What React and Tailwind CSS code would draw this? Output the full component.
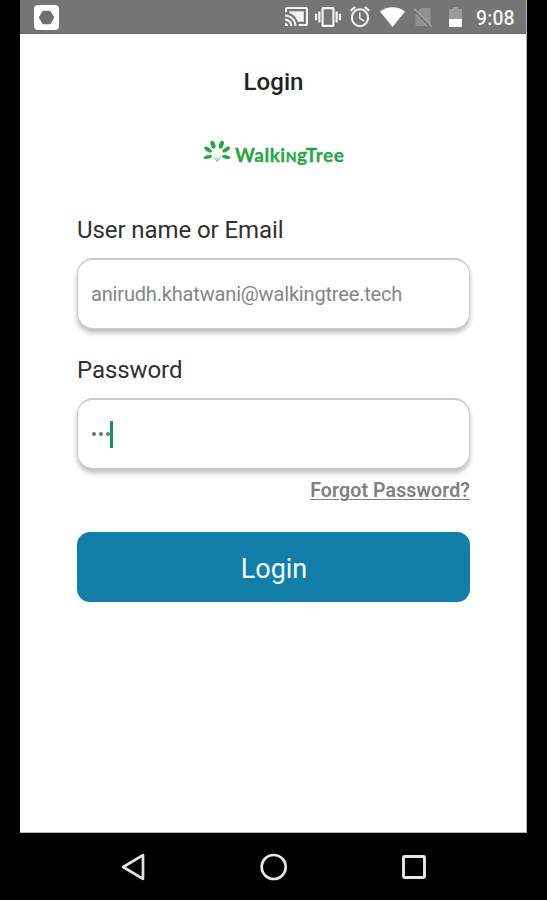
function StatusBar() {
  return (
    <header className="flex h-[34px] shrink-0 items-center border-b border-[#686868] bg-[#757575] pl-[14px] pr-[11px] text-[#f2f2f2]">
      <svg className="mt-px h-[25px] w-[25px]" viewBox="0 0 25 25">
        <rect width="25" height="25" rx="4" fill="#fff" />
        <path d="M9.300 7h6.400l3.200 5.500-3.200 5.500H9.300l-3.200-5.500z" fill="#707070" stroke="#707070" strokeWidth="2.400" strokeLinejoin="round" />
      </svg>
      <svg className="ml-auto h-[19px] w-[23px]" viewBox="1 3 22 18" preserveAspectRatio="none" fill="currentColor">
        <path d="M1 18v3h3c0-1.66-1.34-3-3-3zm0-4v2c2.76 0 5 2.24 5 5h2c0-3.87-3.13-7-7-7zm18-7H5v1.63c3.96 1.28 7.09 4.41 8.37 8.37H19V7zM1 10v2c4.97 0 9 4.03 9 9h2c0-6.08-4.93-11-11-11zm20-7H3c-1.1 0-2 .9-2 2v3h2V5h18v14h-7v2h7c1.1 0 2-.9 2-2V5c0-1.1-.9-2-2-2z" />
      </svg>
      <svg className="ml-[7px] h-5 w-[26px]" viewBox="0 3 24 18" preserveAspectRatio="none" fill="currentColor">
        <path d="M0 15h2V9H0v6zm3 2h2V7H3v10zm19-8v6h2V9h-2zm-3 8h2V7h-2v10zM16.500 3h-9C6.670 3 6 3.670 6 4.500v15c0 .83.67 1.500 1.500 1.500h9c.83 0 1.500-.67 1.500-1.500v-15c0-.83-.67-1.500-1.500-1.500zM16 19H8V5h8v14z" />
      </svg>
      <svg className="ml-[9px] h-[21px] w-[20px]" viewBox="2 1.8 20 20.2" preserveAspectRatio="none" fill="currentColor">
        <path d="M22 5.720l-4.600-3.860-1.290 1.530 4.600 3.860L22 5.720zM7.880 3.390L6.600 1.860 2 5.710l1.290 1.530 4.590-3.850zM12.500 8H11v6l4.750 2.850.75-1.230-4-2.370V8zM12 4c-4.970 0-9 4.030-9 9s4.020 9 9 9c4.970 0 9-4.030 9-9s-4.030-9-9-9zm0 16c-3.870 0-7-3.130-7-7s3.130-7 7-7 7 3.130 7 7-3.130 7-7 7z" />
      </svg>
      <svg className="ml-[10px] h-5 w-[25px]" viewBox="0 0 25 20" fill="#fff">
        <path d="M0 4.500C7 -1.300 18 -1.300 25 4.500L12.500 20z" />
      </svg>
      <svg className="ml-[9px] h-5 w-[19px]" viewBox="0 0 19 20">
        <path d="M7 1h8q1.500 0 1.500 1.500V19H2.500q-1 0-1-1V6.500z" fill="#929292" />
        <path d="M0 2.500L16.500 19.500" stroke="#757575" strokeWidth="2.600" />
        <path d="M0 1.500L18 19.500" stroke="#a0a0a0" strokeWidth="1.500" />
      </svg>
      <svg className="ml-[16px] h-5 w-[13px]" viewBox="0 0 13 20">
        <path d="M0 3.500q0-1.500 1.500-1.500H4V0h5v2h2.500Q13 2 13 3.500V12H0z" fill="#9b9b9b" />
        <path d="M0 12h13v7q0 1-1 1H1q-1 0-1-1z" fill="#fff" />
      </svg>
      <span className="ml-[14px] w-[39px] whitespace-nowrap pt-[4px] text-[19.500px] font-medium leading-5 tracking-[0.1px]">9:08</span>
    </header>
  );
}

function Logo() {
  return (
    <div className="mt-[41px] flex h-8 items-start pl-[183px] text-[#27a744]">
      <svg className="mt-[2px] h-[23px] w-[28px]" viewBox="0 0 28 23" fill="currentColor">
        <ellipse cx="10" cy="4.700" rx="2.300" ry="4.100" transform="rotate(-20 10 4.700)" />
        <ellipse cx="18.300" cy="4.700" rx="2.300" ry="4.100" transform="rotate(20 18.300 4.700)" />
        <ellipse cx="5" cy="9.600" rx="2" ry="4.300" transform="rotate(-58 5 9.600)" />
        <ellipse cx="23.200" cy="9.600" rx="2" ry="4.300" transform="rotate(58 23.200 9.600)" />
        <ellipse cx="4.800" cy="17" rx="1.700" ry="4.300" transform="rotate(76 4.800 17)" />
        <ellipse cx="23.200" cy="17" rx="1.700" ry="4.300" transform="rotate(-76 23.200 17)" />
        <path d="M10 16.500l4.200 5 3.800-5M14.200 21v-4" fill="none" stroke="currentColor" strokeWidth="1" opacity=".65" />
      </svg>
      <span className="ml-1 whitespace-nowrap pt-px font-['Lato',sans-serif] text-[19px] font-bold leading-8 tracking-[0.5px] [-webkit-text-stroke:0.3px]">
        Walki<span className="text-[14px] uppercase">n</span>gTree
      </span>
    </div>
  );
}

function Field({ label, children }) {
  return (
    <label className="block">
      <span className="block h-7 whitespace-nowrap pt-px text-[24px] leading-7 tracking-[-0.08px] text-[#303030]">{label}</span>
      <span className="mt-[15px] flex h-[71px] items-center rounded-[16px] border-[1.5px] border-t-2 border-[#cbcbcb] bg-white pl-[13px] text-[20px] tracking-[-0.17px] text-[#858585] shadow-[0_4px_5px_rgba(0,0,0,0.26)]">
        {children}
      </span>
    </label>
  );
}

function NavigationBar() {
  return (
    <nav className="flex h-[67px] items-center bg-black pl-[121px]">
      <svg className="h-7 w-6" viewBox="0 0 24 28" fill="none" stroke="#e4e4e4" strokeWidth="2.700" strokeLinejoin="round">
        <path d="M2.200 14L22 2.200v23.600z" />
      </svg>
      <svg className="ml-[115px] h-7 w-7" viewBox="0 0 28 28" fill="none" stroke="#e9e9e9" strokeWidth="2.700">
        <circle cx="13.700" cy="14" r="12" />
      </svg>
      <svg className="ml-[114px] h-6 w-6" viewBox="0 0 24 24" fill="none" stroke="#e9e9e9" strokeWidth="2.900">
        <rect x="1.500" y="1.500" width="21" height="21" rx="1" />
      </svg>
    </nav>
  );
}

export default function App() {
  return (
    <div className="h-[900px] w-[547px] overflow-hidden bg-black font-['Roboto',sans-serif]">
      <main className="ml-5 flex h-[833px] w-[507px] flex-col border-b border-r border-[#b5b5b5] bg-white">
        <StatusBar />
        <h1 className="mt-[33px] h-[30px] pl-px text-center text-[24px] font-medium leading-[30px] tracking-[0.1px] text-[#222]">Login</h1>
        <Logo />
        <form className="ml-[57px] mt-[45px] w-[393px]">
          <Field label="User name or Email">anirudh.khatwani@walkingtree.tech</Field>
          <div className="mt-[26px]">
            <Field label="Password">
              <span className="flex gap-[3px] pl-[1px]">
                <i className="h-1 w-1 rounded-full bg-[#707070]" />
                <i className="h-1 w-1 rounded-full bg-[#707070]" />
                <i className="h-1 w-1 rounded-full bg-[#707070]" />
              </span>
              <span className="h-[27px] w-[3px] bg-[#198b7c]" />
            </Field>
          </div>
          <a className="mt-[9px] block h-6 whitespace-nowrap text-right text-[19.500px] font-semibold leading-[25px] tracking-[0.13px] text-[#808080] underline decoration-1 underline-offset-2">Forgot Password?</a>
          <button type="button" className="mt-[30px] block h-[70px] w-full rounded-[13px] bg-[#127fa9] pl-px pt-[5px] text-[27px] text-[#f4fcff]">Login</button>
        </form>
      </main>
      <NavigationBar />
    </div>
  );
}
